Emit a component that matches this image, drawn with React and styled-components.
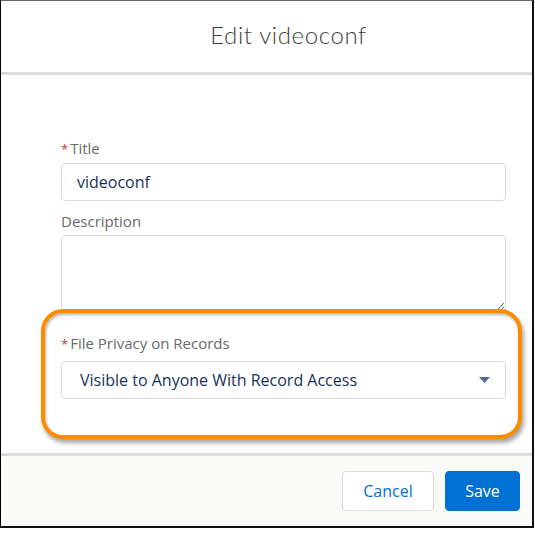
import React from "react";
import styled, { createGlobalStyle } from "styled-components";

const GlobalStyle = createGlobalStyle`
  body {
    margin: 0;
    background: #ffffff;
    font-family: "Open Sans", "Liberation Sans", sans-serif;
  }
`;

const EditModal = () => {
  return (
    <>
      <GlobalStyle />
      <Frame>
        <Header>
          <Title>Edit videoconf</Title>
        </Header>
        <Body>
          <Field gap={11}>
            <Label>
              <Required>*</Required>Title
            </Label>
            <Input defaultValue="videoconf" />
          </Field>
          <Field>
            <Label>Description</Label>
            <TextArea />
          </Field>
          <Highlight>
            <Label>
              <Required>*</Required>File Privacy on Records
            </Label>
            <Select>
              <span>Visible to Anyone With Record Access</span>
              <svg width="11" height="6" viewBox="0 0 11 6">
                <path d="M0 0 L11 0 L5.5 6 Z" fill="#54698d" />
              </svg>
            </Select>
          </Highlight>
        </Body>
        <Footer>
          <Button width={92}>Cancel</Button>
          <Button primary width={75}>
            Save
          </Button>
        </Footer>
      </Frame>
    </>
  );
};

const Frame = styled.div`
  width: 534px;
  height: 528px;
  box-sizing: border-box;
  border-left: 1px solid #000;
  border-top: 1px solid #666;
  border-right: 2px solid #111;
  border-bottom: 2px solid #111;
  display: flex;
  flex-direction: column;
  background: #fff;
`;

const Header = styled.div`
  height: 71px;
  flex-shrink: 0;
  display: flex;
  align-items: center;
  justify-content: center;
  padding-left: 44px;
  border-bottom: 3px solid #dddbda;
`;

const Title = styled.h2`
  margin: 0;
  margin-top: -4px;
  font-family: Lato, "Open Sans", sans-serif;
  font-weight: 300;
  font-size: 24px;
  letter-spacing: 0.6px;
  color: #3e3e3c;
`;

const Body = styled.div`
  flex: 1;
  padding: 64px 26px 0 60px;
  display: flex;
  flex-direction: column;
`;

const Field = styled.div`
  display: flex;
  flex-direction: column;
  margin-bottom: ${(p) => p.gap || 0}px;
`;

const Label = styled.label`
  font-size: 15px;
  line-height: 18px;
  color: #696969;
  margin-bottom: 5px;
`;

const Required = styled.abbr`
  color: #c23934;
  font-size: 13px;
  margin-right: 2px;
  text-decoration: none;
`;

const Input = styled.input`
  height: 38px;
  box-sizing: border-box;
  border: 1px solid #dddbda;
  border-radius: 4px;
  padding: 0 15px;
  font-family: inherit;
  font-size: 16px;
  color: #16325c;
  outline: none;
`;

const TextArea = styled.textarea`
  height: 77px;
  box-sizing: border-box;
  border: 1px solid #dddbda;
  border-radius: 4px;
  resize: vertical;
  font-family: inherit;
  outline: none;
`;

const Highlight = styled.div`
  display: flex;
  flex-direction: column;
  margin: -3px -16px 0 -20px;
  padding: 21px 12px 36px 16px;
  border: 4px solid #fb8c00;
  border-radius: 22px;
  box-shadow: 2px 4px 4px rgba(0, 0, 0, 0.35),
    inset 1px 2px 3px rgba(0, 0, 0, 0.3);
  position: relative;
  background: #fff;

  label {
    margin-bottom: 8px;
  }
`;

const Select = styled.div`
  height: 38px;
  box-sizing: border-box;
  border: 1px solid #dddbda;
  border-radius: 4px;
  padding: 0 15px 0 18px;
  display: flex;
  align-items: center;
  justify-content: space-between;
  font-size: 16px;
  color: #16325c;
`;

const Footer = styled.div`
  height: 70px;
  flex-shrink: 0;
  border-top: 3px solid #dddbda;
  background: #fafaf9;
  display: flex;
  align-items: center;
  justify-content: flex-end;
  gap: 11px;
  padding-right: 12px;
`;

const Button = styled.button`
  height: 40px;
  width: ${(p) => p.width}px;
  padding: 0;
  border-radius: 4px;
  border: 1px solid ${(p) => (p.primary ? "#0070d2" : "#dddbda")};
  background: ${(p) => (p.primary ? "#0070d2" : "#fff")};
  color: ${(p) => (p.primary ? "#fff" : "#0070d2")};
  font-family: inherit;
  font-size: 16px;
  cursor: pointer;
`;

export default EditModal;
